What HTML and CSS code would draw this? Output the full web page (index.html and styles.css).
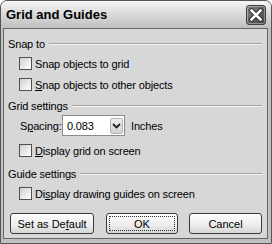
FILE: index.html
```html
<!DOCTYPE html>
<html lang="en">
<head>
  <meta charset="UTF-8"/>
  <title>Grid and Guides</title>
  <link rel="stylesheet" href="styles.css">
</head>
<body>
  <div class="dialog">
    <div class="titlebar">
      <span class="title">Grid and Guides</span>
      <span class="close">
        <svg viewBox="0 0 20 20" width="20" height="20">
          <path d="M5.5 5.5 L14.5 14.5 M14.5 5.5 L5.5 14.5" stroke="#2a2a2a" stroke-width="4.4" stroke-linecap="square"/>
          <path d="M5.5 5.5 L14.5 14.5 M14.5 5.5 L5.5 14.5" stroke="#fff" stroke-width="2.6" stroke-linecap="square"/>
        </svg>
      </span>
    </div>

    <div class="client">
      <div class="head"><span>Snap to</span><span class="rule"></span></div>
      <label class="check gap-first"><span class="box"></span><span>Snap objects to grid</span></label>
      <label class="check gap-row"><span class="box"></span><span><u>S</u>nap objects to other objects</span></label>

      <div class="head gap-head"><span>Grid settings</span><span class="rule"></span></div>
      <div class="spacing">
        <span class="spacing-label">S<u>p</u>acing:</span>
        <span class="combo"><span class="combo-value">0.083</span><span class="combo-btn"><svg viewBox="0 0 9 6" width="9" height="6"><path d="M1 1 L4.5 4.5 L8 1" fill="none" stroke="#222" stroke-width="1.8"/></svg></span></span>
        <span class="units">Inches</span>
      </div>
      <label class="check gap-spacing"><span class="box"></span><span><u>D</u>isplay grid on screen</span></label>

      <div class="head gap-head2"><span>Guide settings</span><span class="rule"></span></div>
      <label class="check gap-first"><span class="box"></span><span>Di<u>s</u>play drawing guides on screen</span></label>

      <div class="buttons">
        <button class="btn btn-default">Set as De<u>f</u>ault</button>
        <button class="btn btn-ok"><span class="focus">OK</span></button>
        <button class="btn btn-cancel">Cancel</button>
      </div>
    </div>
  </div>
</body>
</html>
```

FILE: styles.css
```css
/* ===== Base ===== */
* { margin:0; padding:0; box-sizing:border-box; }
body { width:272px; height:244px; overflow:hidden; background:#fff; font-family:"Liberation Sans",Arial,sans-serif; font-size:11px; letter-spacing:-.15px; color:#000; }

/* ===== Window frame ===== */
.dialog { width:272px; height:244px; display:flex; flex-direction:column; background:#c0c0c0; border:1px solid #555; border-radius:7px 7px 0 0; padding:0 3px 4px 2px; }
.titlebar { height:27px; margin:0 -3px 0 -2px; padding:0 5px; display:flex; align-items:center; justify-content:space-between; border-radius:6px 6px 0 0; background:linear-gradient(#f6f6f6 0%, #e4e4e4 30%, #cfcfcf 70%, #c0c0c0 100%); }
.title { font-size:13px; font-weight:700; letter-spacing:0; }
.close { width:20px; height:20px; display:flex; border:1px solid #3c3c3c; border-radius:3px; background:linear-gradient(135deg,#8a8a8a,#5c5c5c 60%,#4a4a4a); box-shadow:inset 0 0 0 1px rgba(255,255,255,.35); }
.close svg { margin:-1px; }

/* ===== Client area ===== */
.client { flex:1; display:flex; flex-direction:column; background:#d7d7d7; border:1px solid #666; padding:8px 5px 0 4px; }
.head { height:13px; display:flex; align-items:center; gap:4px; }
.head .rule { flex:1; height:2px; border-top:1px solid #a2a2a2; border-bottom:1px solid #f4f4f4; }
.check { height:13px; margin-left:11px; display:flex; align-items:center; gap:3px; }
.box { width:13px; height:13px; border:1px solid #505050; background:linear-gradient(135deg,#cfcfcf,#f2f2f2 70%,#fff); }
.gap-first { margin-top:7px; }
.gap-row { margin-top:8px; }
.gap-head { margin-top:8px; }
.gap-spacing { margin-top:8px; }
.gap-head2 { margin-top:10px; }

/* ===== Spacing combo ===== */
.spacing { height:21px; margin-top:3px; margin-left:12px; display:flex; align-items:center; }
.spacing-label { width:42px; }
.combo { width:63px; height:21px; display:flex; align-items:center; justify-content:space-between; background:#fff; border:1px solid #8a8a8a; padding:0 1px 0 4px; }
.combo-btn { width:13px; height:16px; display:flex; align-items:center; justify-content:center; border:1px solid #b4b4b4; border-radius:2px; background:linear-gradient(#f0f0f0,#d0d0d0); }
.units { margin-left:6px; }

/* ===== Buttons ===== */
.buttons { margin-top:13px; margin-left:2px; display:flex; }
.btn { height:21px; font:inherit; color:#000; border:1px solid #3a3a3a; border-radius:3px; background:linear-gradient(#fdfdfd,#ececec 60%,#d6d6d6); display:flex; align-items:center; justify-content:center; }
.btn-default { width:84px; }
.btn-ok { width:72px; margin-left:12px; padding:2px; }
.btn-ok .focus { flex:1; align-self:stretch; display:flex; align-items:center; justify-content:center; border:1px dotted #333; }
.btn-cancel { width:73px; margin-left:11px; }
```
